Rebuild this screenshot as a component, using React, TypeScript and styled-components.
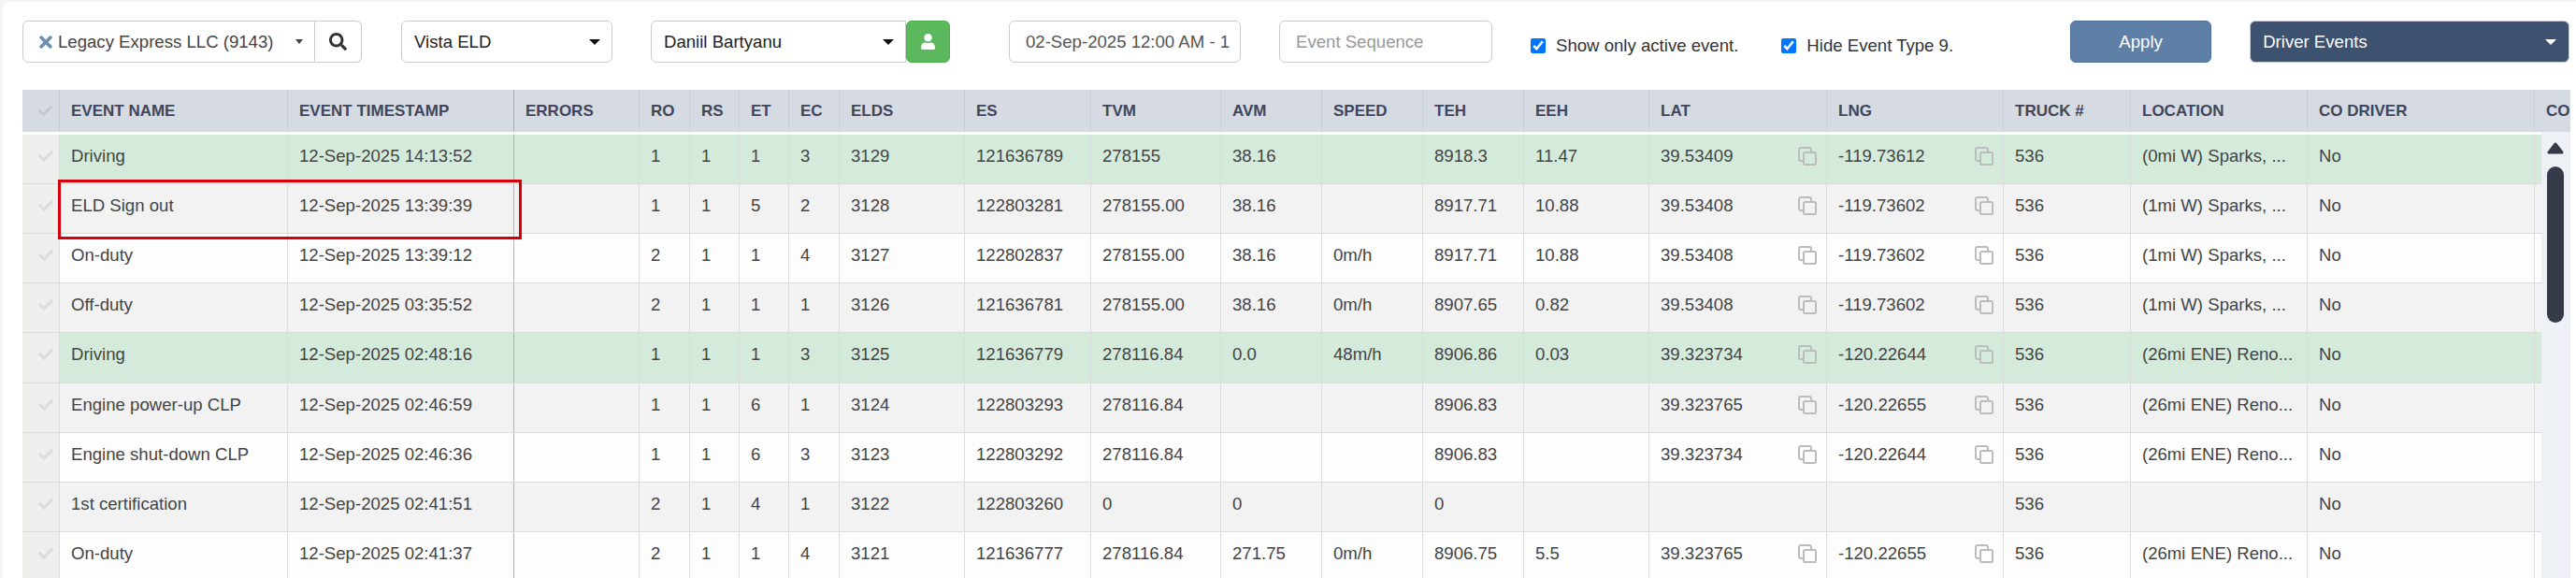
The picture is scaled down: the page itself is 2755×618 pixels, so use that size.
import React from 'react';
import styled, { createGlobalStyle } from 'styled-components';
import { FaCheck, FaSearch, FaTimes, FaUser } from 'react-icons/fa';

const COLUMNS = '40px 244px 242px 134px 54px 53px 53px 54px 134px 135px 139px 108px 108px 108px 134px 190px 189px 136px 189px 243px 120px';

const GlobalStyle = createGlobalStyle`
  html, body {
    margin: 0;
    height: 100%;
    overflow: hidden;
    background: #f4f4f4;
    font-family: "Liberation Sans", Arial, sans-serif;
  }
`;

const Page = styled.div`
  box-sizing: border-box;
  height: 616px;
  margin: 2px 0 0 3px;
  padding: 20px 6px 0 21px;
  background: #fff;
  border-top-left-radius: 8px;
  overflow: hidden;
`;

const Toolbar = styled.div`
  display: flex;
  align-items: stretch;
  height: 45px;
  margin-bottom: 29px;
  font-size: 18.6px;
  color: #222;
`;

const Control = styled.div<{ $width: number; $left?: number }>`
  box-sizing: border-box;
  display: flex;
  align-items: center;
  flex: none;
  width: ${p => p.$width}px;
  margin-left: ${p => p.$left ?? 0}px;
  padding: 0 12px 0 13px;
  background: #fff;
  border: 1px solid #ccc;
  border-radius: 6px;
  white-space: nowrap;
`;

const CompanyControl = styled(Control)`
  padding-left: 17px;
  border-radius: 6px 0 0 6px;
  color: #444;
  svg {
    flex: none;
    width: 14px;
    height: 20px;
    margin-right: 6px;
    color: #6c8fb3;
  }
`;

const DriverControl = styled(Control)`
  border-radius: 6px 0 0 6px;
`;

const ControlText = styled.span`
  flex: 1;
`;

const Caret = styled.span<{ $color?: string; $small?: boolean }>`
  flex: none;
  width: 0;
  height: 0;
  border-style: solid;
  border-color: ${p => p.$color ?? '#111'} transparent transparent;
  border-width: ${p => (p.$small ? '5px 4px 0' : '6px 6px 0')};
`;

const SearchButton = styled.button`
  box-sizing: border-box;
  display: flex;
  align-items: center;
  justify-content: center;
  flex: none;
  width: 50px;
  padding: 0;
  background: #fff;
  border: 1px solid #ccc;
  border-left: 0;
  border-radius: 0 6px 6px 0;
  color: #333;
  font-size: 19px;
`;

const UserButton = styled.button`
  display: flex;
  align-items: center;
  justify-content: center;
  flex: none;
  width: 47px;
  padding: 0;
  background: #5cb85c;
  border: 1px solid #4cae4c;
  border-radius: 6px;
  color: #fff;
  font-size: 17px;
`;

const TextInput = styled.input<{ $width: number; $left: number }>`
  box-sizing: border-box;
  flex: none;
  width: ${p => p.$width}px;
  margin-left: ${p => p.$left}px;
  padding: 0 6px 0 17px;
  background: #fff;
  border: 1px solid #ccc;
  border-radius: 6px;
  color: #555;
  font: inherit;
  &::placeholder {
    color: #999;
    opacity: 1;
  }
`;

const CheckLabel = styled.label<{ $left: number }>`
  display: flex;
  align-items: center;
  flex: none;
  gap: 11px;
  margin-left: ${p => p.$left}px;
  padding-top: 8px;
  font-size: 18.6px;
  color: #333;
  input {
    width: 16px;
    height: 16px;
    margin: 0;
  }
`;

const ApplyButton = styled.button`
  flex: none;
  width: 151px;
  margin-left: 125px;
  padding: 0;
  background: #5f80a6;
  border: 1px solid #4f7096;
  border-radius: 6px;
  color: #fff;
  font: inherit;
`;

const ViewControl = styled(Control)`
  padding: 0 13px 0 13px;
  background: #3d5170;
  border-color: #c9ced6;
  color: #fff;
`;

const Table = styled.div`
  position: relative;
  overflow: hidden;
  width: 2725px;
  font-size: 18.6px;
  color: #444;
`;

const HeadRow = styled.div`
  display: grid;
  grid-template-columns: ${COLUMNS};
  height: 45px;
  margin-bottom: 3px;
  background: #d6dae2;
  font-size: 17px;
  font-weight: 700;
  color: #41465a;
`;

const HeadCell = styled.div<{ $strong?: boolean }>`
  display: flex;
  align-items: center;
  padding-left: 12px;
  border-right: 1px solid ${p => (p.$strong ? '#a9adb3' : '#c9cdd4')};
  white-space: nowrap;
  overflow: hidden;
`;

const TickHead = styled(HeadCell)`
  padding-left: 17px;
  color: #c3c7d0;
  font-size: 15px;
`;

const Body = styled.div`
  display: flex;
  height: 490px;
`;

const Rows = styled.div`
  flex: none;
  width: 2694px;
  overflow: hidden;
`;

const Row = styled.div<{ $bg: string }>`
  box-sizing: border-box;
  display: grid;
  grid-template-columns: ${COLUMNS};
  height: 53.12px;
  background: ${p => p.$bg};
  border-bottom: 1px solid #dcdcdc;
`;

const Cell = styled.div<{ $strong?: boolean }>`
  display: flex;
  align-items: center;
  justify-content: space-between;
  padding: 0 10px 6px 12px;
  border-right: 1px solid ${p => (p.$strong ? '#b4b4b4' : '#dcdcdc')};
  white-space: nowrap;
  overflow: hidden;
`;

const TickCell = styled.div`
  display: flex;
  align-items: center;
  padding: 0 0 6px 17px;
  background: #efefed;
  border-right: 1px solid #dcdcdc;
  color: #dcdcdc;
  font-size: 16px;
`;

const CopyIcon = styled.svg`
  flex: none;
  width: 20px;
  height: 20px;
  color: #bbbdbd;
`;

const Scrollbar = styled.div`
  position: relative;
  flex: none;
  width: 31px;
  margin-top: -3px;
  background: #edf0f4;
`;

const ScrollArrow = styled.svg`
  position: absolute;
  top: 11px;
  left: 6px;
  width: 18px;
  height: 13px;
  color: #353b49;
`;

const ScrollThumb = styled.span`
  position: absolute;
  top: 37px;
  left: 6px;
  width: 18px;
  height: 167px;
  background: #353b49;
  border-radius: 9px;
`;

const Highlight = styled.div`
  position: absolute;
  top: 96px;
  left: 38px;
  width: 496px;
  height: 64px;
  box-sizing: border-box;
  border: 3px solid #d4000c;
  pointer-events: none;
`;

const Copy = () => (
  <CopyIcon viewBox="0 0 20 20" fill="none" stroke="currentColor" strokeWidth="2">
    <path d="M6 15H3a2 2 0 0 1-2-2V3a2 2 0 0 1 2-2h9a2 2 0 0 1 2 2v3" />
    <rect x="6" y="6" width="13" height="13" rx="1.5" />
  </CopyIcon>
);

const HEADERS = ['EVENT NAME', 'EVENT TIMESTAMP', 'ERRORS', 'RO', 'RS', 'ET', 'EC', 'ELDS', 'ES', 'TVM', 'AVM', 'SPEED', 'TEH', 'EEH', 'LAT', 'LNG', 'TRUCK #', 'LOCATION', 'CO DRIVER', 'COMMENT'];

const GREEN = '#d4ebdb';
const GRAY = '#f2f2f2';
const WHITE = '#fdfdfd';

const SPARKS_0 = '(0mi W) Sparks, ...';
const SPARKS_1 = '(1mi W) Sparks, ...';
const RENO = '(26mi ENE) Reno...';

const ROWS: { bg: string; cells: string[] }[] = [
  { bg: GREEN, cells: ['Driving', '12-Sep-2025 14:13:52', '', '1', '1', '1', '3', '3129', '121636789', '278155', '38.16', '', '8918.3', '11.47', '39.53409', '-119.73612', '536', SPARKS_0, 'No'] },
  { bg: GRAY, cells: ['ELD Sign out', '12-Sep-2025 13:39:39', '', '1', '1', '5', '2', '3128', '122803281', '278155.00', '38.16', '', '8917.71', '10.88', '39.53408', '-119.73602', '536', SPARKS_1, 'No'] },
  { bg: WHITE, cells: ['On-duty', '12-Sep-2025 13:39:12', '', '2', '1', '1', '4', '3127', '122802837', '278155.00', '38.16', '0m/h', '8917.71', '10.88', '39.53408', '-119.73602', '536', SPARKS_1, 'No'] },
  { bg: GRAY, cells: ['Off-duty', '12-Sep-2025 03:35:52', '', '2', '1', '1', '1', '3126', '121636781', '278155.00', '38.16', '0m/h', '8907.65', '0.82', '39.53408', '-119.73602', '536', SPARKS_1, 'No'] },
  { bg: GREEN, cells: ['Driving', '12-Sep-2025 02:48:16', '', '1', '1', '1', '3', '3125', '121636779', '278116.84', '0.0', '48m/h', '8906.86', '0.03', '39.323734', '-120.22644', '536', RENO, 'No'] },
  { bg: GRAY, cells: ['Engine power-up CLP', '12-Sep-2025 02:46:59', '', '1', '1', '6', '1', '3124', '122803293', '278116.84', '', '', '8906.83', '', '39.323765', '-120.22655', '536', RENO, 'No'] },
  { bg: WHITE, cells: ['Engine shut-down CLP', '12-Sep-2025 02:46:36', '', '1', '1', '6', '3', '3123', '122803292', '278116.84', '', '', '8906.83', '', '39.323734', '-120.22644', '536', RENO, 'No'] },
  { bg: GRAY, cells: ['1st certification', '12-Sep-2025 02:41:51', '', '2', '1', '4', '1', '3122', '122803260', '0', '0', '', '0', '', '', '', '536', '', 'No'] },
  { bg: WHITE, cells: ['On-duty', '12-Sep-2025 02:41:37', '', '2', '1', '1', '4', '3121', '121636777', '278116.84', '271.75', '0m/h', '8906.75', '5.5', '39.323765', '-120.22655', '536', RENO, 'No'] },
];

// index of the LAT and LNG columns, they get a copy button when filled
const COPY_COLUMNS = [14, 15];

export default function App() {
  return (
    <>
      <GlobalStyle />
      <Page>
        <Toolbar>
          <CompanyControl $width={313}>
            <FaTimes />
            <ControlText>Legacy Express LLC (9143)</ControlText>
            <Caret $color="#444" $small />
          </CompanyControl>
          <SearchButton><FaSearch /></SearchButton>
          <Control $width={226} $left={42}>
            <ControlText>Vista ELD</ControlText>
            <Caret />
          </Control>
          <DriverControl $width={273} $left={41}>
            <ControlText>Daniil Bartyanu</ControlText>
            <Caret />
          </DriverControl>
          <UserButton><FaUser /></UserButton>
          <TextInput $width={248} $left={63} readOnly value="02-Sep-2025 12:00 AM - 1" />
          <TextInput $width={228} $left={41} placeholder="Event Sequence" />
          <CheckLabel $left={41}>
            <input type="checkbox" defaultChecked />
            Show only active event.
          </CheckLabel>
          <CheckLabel $left={46}>
            <input type="checkbox" defaultChecked />
            Hide Event Type 9.
          </CheckLabel>
          <ApplyButton>Apply</ApplyButton>
          <ViewControl $width={342} $left={41}>
            <ControlText>Driver Events</ControlText>
            <Caret $color="#fff" />
          </ViewControl>
        </Toolbar>
        <Table>
          <HeadRow>
            <TickHead><FaCheck /></TickHead>
            {HEADERS.map((title, i) => (
              <HeadCell key={title} $strong={i === 1}>{title}</HeadCell>
            ))}
          </HeadRow>
          <Body>
            <Rows>
              {ROWS.map((row, r) => (
                <Row key={r} $bg={row.bg}>
                  <TickCell><FaCheck /></TickCell>
                  {row.cells.map((text, i) => (
                    <Cell key={i} $strong={i === 1}>
                      <span>{text}</span>
                      {text && COPY_COLUMNS.includes(i) ? <Copy /> : null}
                    </Cell>
                  ))}
                  <Cell />
                </Row>
              ))}
            </Rows>
            <Scrollbar>
              <ScrollArrow viewBox="0 0 18 13">
                <path d="M9 2L2 11H16Z" fill="currentColor" stroke="currentColor" strokeWidth="3" strokeLinejoin="round" />
              </ScrollArrow>
              <ScrollThumb />
            </Scrollbar>
          </Body>
          <Highlight />
        </Table>
      </Page>
    </>
  );
}
